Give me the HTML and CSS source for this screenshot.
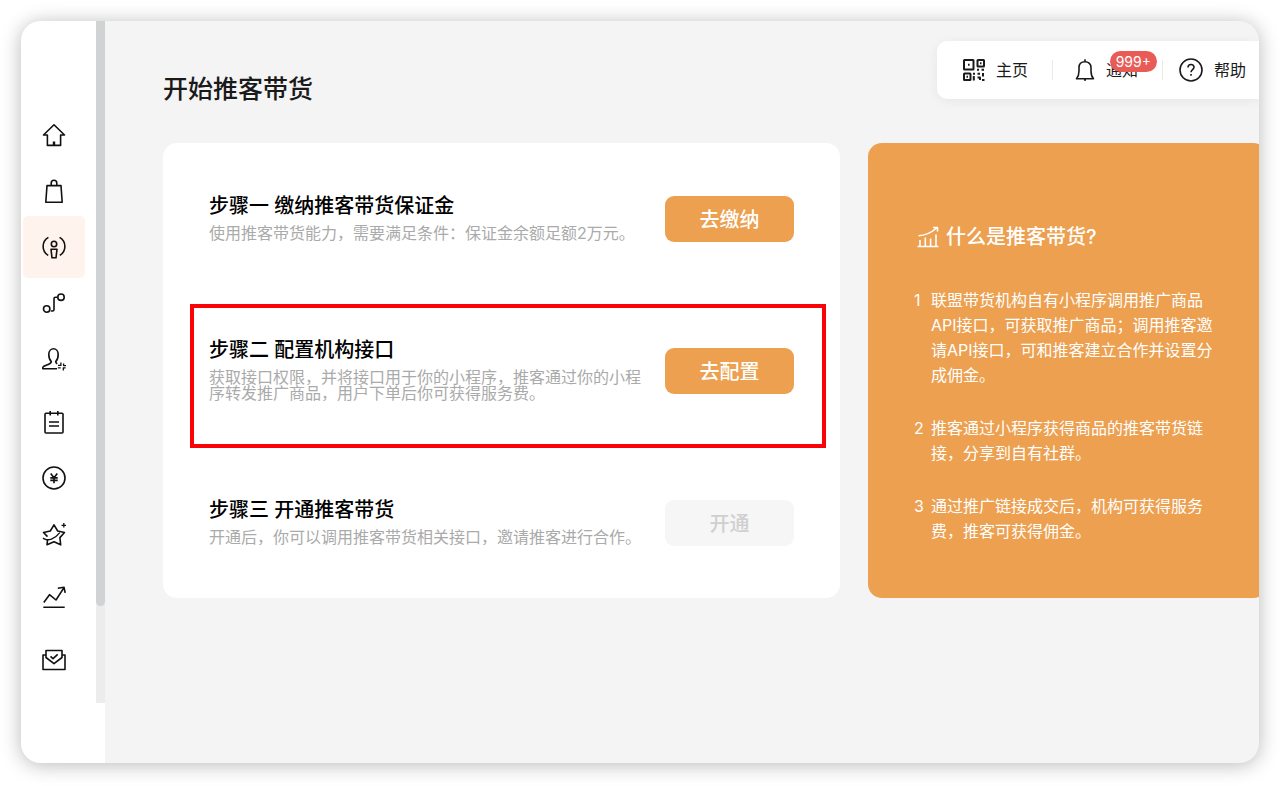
FILE: index.html
```html
<!DOCTYPE html>
<html lang="zh-CN">
<head>
<meta charset="utf-8">
<meta name="viewport" content="width=device-width, initial-scale=1">
<title>开始推客带货</title>
<link rel="stylesheet" href="styles.css">
</head>
<body>
<div class="window">
  <aside class="sidebar">
    <nav class="nav" aria-label="主导航">
      <a class="nav-link" href="#home" aria-label="首页"><svg class="icon" viewBox="0 0 24 24"><path d="M12 1.800 1.500 12H5.400V22.400H18.600V12H22.500Z"/><path d="M12 18.500V22.400" stroke-width="2.400"/></svg></a>
      <a class="nav-link" href="#goods" aria-label="商品"><svg class="icon" viewBox="0 0 24 24"><path d="M5 6.600H19L20.200 23.200H3.800Z"/><path d="M9.200 6.400V4.200C9.200 .3 14.800 .3 14.800 4.200V6.400"/></svg></a>
      <a class="nav-link nav-link-active" href="#promoters" aria-label="推客" aria-current="page"><svg class="icon" viewBox="0 0 24 24"><circle cx="12" cy="9" r="2.700"/><path d="M9 14.200H15L14 22.800H10Z"/><path d="M6.400 2.400C-.6 6.500-.6 16 6.200 20.400M17.600 2.400C24.600 6.500 24.600 16 17.800 20.400"/></svg></a>
      <a class="nav-link" href="#links" aria-label="链路"><svg class="icon" viewBox="0 0 24 24"><circle cx="4.700" cy="18" r="3.200"/><circle cx="19" cy="6.200" r="3.200"/><path d="M8.800 20H10.500Q12 20 12 18.500V7.700Q12 6.200 13.500 6.200H15.800"/></svg></a>
      <a class="nav-link" href="#partners" aria-label="合作"><svg class="icon" viewBox="0 0 24 24"><path d="M15 21.800H1.500Q.2 21.800 1 20C3 17.800 9 17.800 9.300 14.600C7.500 12.800 6.800 10.300 6.800 7.500C6.800-.1 16.200-.1 16.200 7.500C16.200 10.300 15.500 12.800 13.700 14.600Q13.800 15.900 15.200 16.800"/><path d="M16 18.400H18.900V15.500M21.600 16.500V18.600H24.200M15.800 20.800H18.700M21.300 23.500V20.800H23.600" stroke-width="1.300"/></svg></a>
      <a class="nav-link nav-link-section" href="#orders" aria-label="订单"><svg class="icon" viewBox="0 0 24 24"><rect x="3" y="3.200" width="18" height="19.800" rx="1"/><path d="M8.200 1V5.500M15.800 1V5.500M7 12H17M7 16H17"/></svg></a>
      <a class="nav-link" href="#funds" aria-label="资金"><svg class="icon" viewBox="0 0 24 24"><circle cx="12" cy="12" r="11"/><path d="M8.700 7.500 12 11.800 15.300 7.500M12 11.800V17.200M8.300 11.900H15.700M8.300 14.400H15.700"/></svg></a>
      <a class="nav-link" href="#activity" aria-label="活动"><svg class="icon" viewBox="0 0 24 24"><path d="M5.600 17.300 5 22.800 12 19.700 18.700 22.800 17.900 15.600 22.500 10.500 15.700 9 12 2.800 8.300 9 1.500 10.500 5.500 14.600"/><path d="M1 16C5.500 20 13.500 16.500 17.800 10.700M1 16.300 5.500 18.200M21.800 1V5.600M19.500 3.300H24" stroke-width="1.300"/></svg></a>
      <a class="nav-link nav-link-section" href="#data" aria-label="数据"><svg class="icon" viewBox="0 0 24 24"><path d="M1.300 22.200H22.700M1.800 17.500 7.500 9.700 14 15 22 2.600M15.800 3.200 22 2.200 23.200 7.800"/></svg></a>
      <a class="nav-link nav-link-section" href="#messages" aria-label="消息"><svg class="icon" viewBox="0 0 24 24"><path d="M4 7H1V21.500H23V7H20"/><path d="M4 9.500V2.500H20V9.500L12 15.700Z"/><path d="M8.500 8.300 11 10.700 15.700 6.300"/></svg></a>
    </nav>
    <div class="scroll-track"><div class="scroll-thumb"></div></div>
  </aside>
  <main class="main">
    <header class="header">
      <h1 class="title">开始推客带货</h1>
      <div class="topbar">
        <a class="top-link" href="#index"><svg class="icon icon-qr" viewBox="0 0 22 22"><rect x="1" y="1" width="9.500" height="9.500" rx=".5"/><rect x="14.500" y="1" width="6.500" height="6.500" rx=".5"/><rect x="1" y="14.500" width="6.500" height="6.500" rx=".5"/><path d="M5 5.800H6.600M17 4.300H18.500M3.500 17.800H5M14 10.700H16M18.500 10.700H21M10 14.800H12M14.500 14.800H17M20 14V17.500M10.800 17V21.500M14.500 18.500H17V21M19 21H21.500"/></svg>主页</a>
        <span class="divider"></span>
        <a class="top-link" href="#notice"><svg class="icon icon-bell" viewBox="0 0 20 24"><path d="M1.500 20.800H18.500C16.500 18.500 16 16.500 16 13V9.500C16 6 13.700 3.800 10 3.800S4 6 4 9.500V13C4 16.500 3.500 18.500 1.500 20.800ZM10 1.300V3.800M9 22H11"/></svg>通知<span class="badge">999+</span></a>
        <span class="divider divider-tight"></span>
        <a class="top-link" href="#help"><svg class="icon" viewBox="0 0 24 24"><circle cx="12" cy="12" r="11"/><path d="M9 9.500C9 5.500 15 5.500 15 9.300C15 11.500 12 11.800 12 14.300M12 16V17.700"/></svg>帮助</a>
      </div>
    </header>
    <div class="cards">
      <section class="steps">
        <div class="step">
          <div class="step-text">
            <h2 class="step-title">步骤一 缴纳推客带货保证金</h2>
            <p class="step-desc">使用推客带货能力，需要满足条件：保证金余额足额2万元。</p>
          </div>
          <button class="button" type="button">去缴纳</button>
        </div>
        <div class="step step-highlight">
          <div class="step-text">
            <h2 class="step-title">步骤二 配置机构接口</h2>
            <p class="step-desc">获取接口权限，并将接口用于你的小程序，推客通过你的小程序转发推广商品，用户下单后你可获得服务费。</p>
          </div>
          <button class="button" type="button">去配置</button>
        </div>
        <div class="step">
          <div class="step-text">
            <h2 class="step-title">步骤三 开通推客带货</h2>
            <p class="step-desc">开通后，你可以调用推客带货相关接口，邀请推客进行合作。</p>
          </div>
          <button class="button" type="button" disabled>开通</button>
        </div>
      </section>
      <section class="about">
        <h2 class="about-title"><svg class="icon icon-growth" viewBox="0 0 22 22"><path d="M.5 20.500H21.500M3 20V14M8.300 20V11.500M13.600 20V12.500M19 20V8.500M1.500 9.800C9 9.500 14.500 6.500 19.500 2M16 1.500H20.500V5.500"/></svg>什么是推客带货?</h2>
        <ol class="about-list">
          <li class="about-item"><span>1</span><p>联盟带货机构自有小程序调用推广商品API接口，可获取推广商品；调用推客邀请API接口，可和推客建立合作并设置分成佣金。</p></li>
          <li class="about-item"><span>2</span><p>推客通过小程序获得商品的推客带货链接，分享到自有社群。</p></li>
          <li class="about-item"><span>3</span><p>通过推广链接成交后，机构可获得服务费，推客可获得佣金。</p></li>
        </ol>
      </section>
    </div>
  </main>
</div>
</body>
</html>
```
FILE: styles.css
```css
* {
  box-sizing: border-box;
}

body {
  margin: 0;
  min-height: 100vh;
  padding: 21px 21px 23px;
  display: flex;
  background: #fff;
  color: #1a1a1a;
  font-family: Inter, "Noto Sans CJK SC", sans-serif;
  font-size: 16px;
}

h1, h2, p, ol {
  margin: 0;
  padding: 0;
  font-weight: 400;
}

.window {
  flex: 1;
  min-width: 0;
  display: flex;
  overflow: hidden;
  border-radius: 20px;
  background: #f4f4f4;
  box-shadow: 0 2px 20px rgba(0, 0, 0, 0.28);
}

.icon {
  width: 24px;
  height: 24px;
  flex: none;
  fill: none;
  stroke: currentColor;
  stroke-width: 1.6;
  stroke-linejoin: round;
}

/* Sidebar */
.sidebar {
  flex: none;
  display: flex;
  align-items: flex-start;
  width: 84px;
  background: #fff;
}

.nav {
  flex: 1;
  display: flex;
  flex-direction: column;
  align-items: flex-start;
  padding: 83px 0 0 2px;
}

.nav-link {
  display: flex;
  align-items: center;
  justify-content: center;
  width: 62px;
  height: 62px;
  margin-bottom: -6px;
  border-radius: 5px;
  color: #111;
}

.nav-link-active {
  background: #fef4ed;
}

.nav-link-section {
  margin-top: 7px;
}

.scroll-track {
  width: 9px;
  height: 682px;
  background: #ececec;
}

.scroll-thumb {
  height: 585px;
  border-radius: 0 0 5px 5px;
  background: #d0d2d3;
}

/* Main column */
.main {
  flex: 1;
  min-width: 0;
  padding: 20px 0 20px 58px;
}

.header {
  display: flex;
  align-items: flex-start;
  justify-content: space-between;
  margin-bottom: 36px;
}

.title {
  padding-top: 30px;
  font-size: 25px;
  font-weight: 500;
  line-height: 36px;
}

.topbar {
  display: flex;
  align-items: center;
  height: 58px;
  padding: 0 13px 0 26px;
  border-radius: 10px 0 0 10px;
  background: #fff;
  box-shadow: 0 2px 12px rgba(0, 0, 0, 0.06);
}

.top-link {
  position: relative;
  display: flex;
  align-items: center;
  gap: 11px;
  color: #1a1a1a;
  line-height: 24px;
  text-decoration: none;
}

.icon-qr {
  width: 22px;
  height: 22px;
  stroke-width: 2;
}

.icon-bell {
  width: 20px;
}

.divider {
  width: 1px;
  height: 20px;
  margin: 0 22px 0 24px;
  background: #ebebeb;
}

.divider-tight {
  margin-right: 16px;
}

.badge {
  position: absolute;
  top: -7px;
  right: -19px;
  padding: 0 6px;
  border-radius: 11px;
  background: #e85b57;
  color: #fff;
  font-size: 14px;
  line-height: 21px;
}

.cards {
  display: grid;
  grid-template-columns: 677fr 399fr;
  gap: 28px;
  margin-right: -8px;
}

/* Steps */
.steps {
  display: flex;
  flex-direction: column;
  padding: 49px 14px 48px 27px;
  border-radius: 14px;
  background: #fff;
}

.step {
  display: flex;
  align-items: center;
  gap: 16px;
  padding: 0 32px 0 19px;
}

.step-highlight {
  margin: 58px 0 48px;
  padding: 28px 28px 38px 15px;
  border: 4px solid #fb0207;
}

.step-text {
  flex: 1;
  padding-bottom: 5px;
}

.step-title {
  margin-bottom: 5px;
  color: #000;
  font-size: 20px;
  font-weight: 500;
  line-height: 28px;
}

.step-desc {
  color: #aaa;
  line-height: 16px;
}

.button {
  flex: none;
  width: 129px;
  height: 46px;
  padding: 0 0 2px;
  border: 0;
  border-radius: 9px;
  background: #eca050;
  color: #fff;
  font-family: inherit;
  font-size: 20px;
  font-weight: 500;
}

.button:disabled {
  background: #f6f6f6;
  color: #cfcfcf;
}

/* Explanation card */
.about {
  padding: 79px 50px 40px 46px;
  border-radius: 14px;
  background: #eca050;
  color: #fff;
}

.about-title {
  display: flex;
  align-items: center;
  gap: 7px;
  margin-bottom: 36px;
  padding-left: 3px;
  font-size: 20px;
  font-weight: 500;
  line-height: 30px;
}

.icon-growth {
  width: 22px;
  height: 22px;
}

.about-list {
  display: grid;
  gap: 28px;
  list-style: none;
  line-height: 25px;
}

.about-item {
  display: grid;
  grid-template-columns: 17px 1fr;
}
```
